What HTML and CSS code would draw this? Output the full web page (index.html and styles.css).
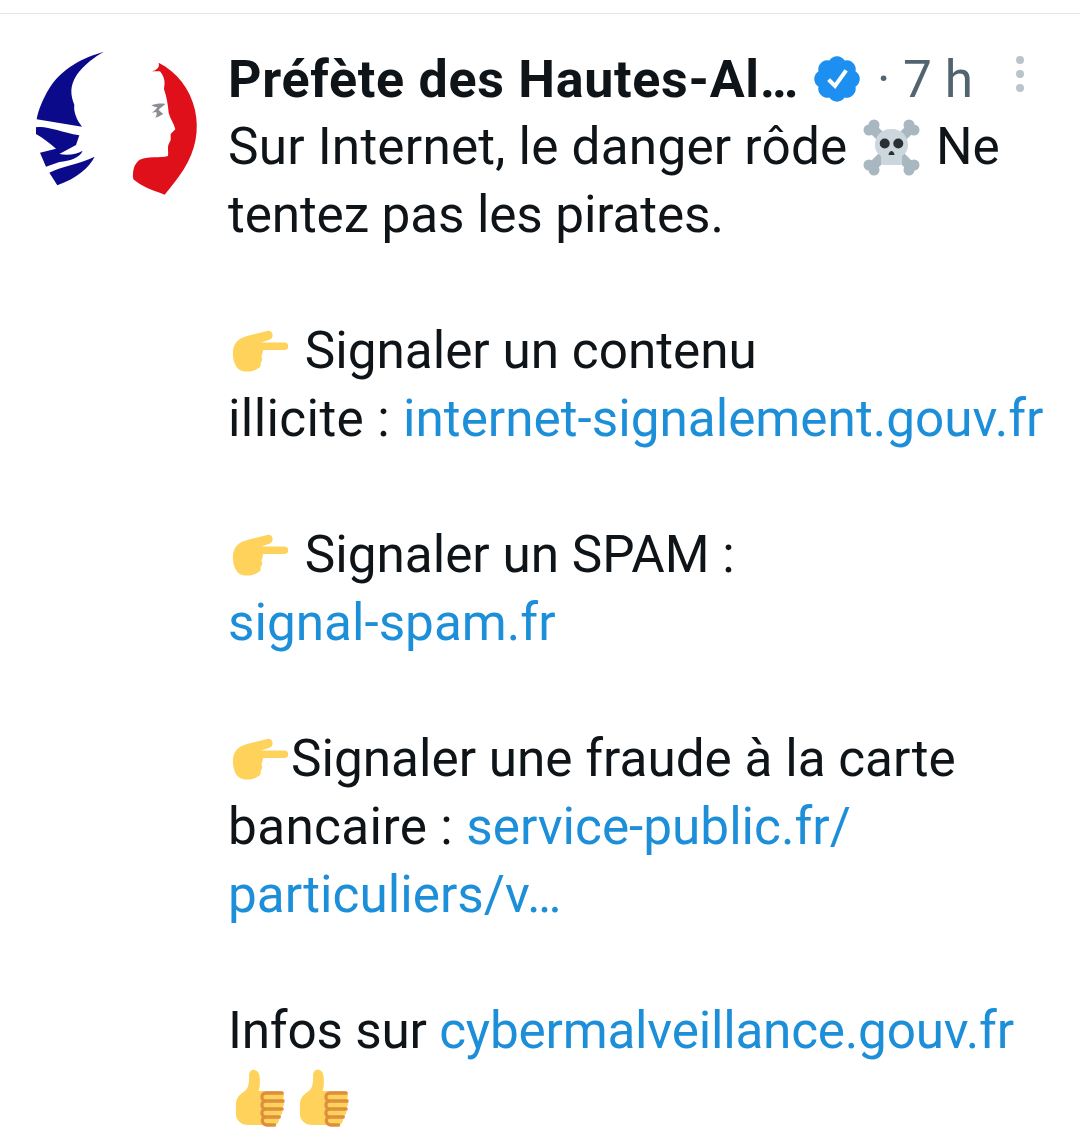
FILE: index.html
```html
<!DOCTYPE html>
<html lang="fr">
<head>
<meta charset="utf-8">
<title>Tweet</title>
<link rel="stylesheet" href="styles.css">
</head>
<body>
<svg class="defs" width="0" height="0" aria-hidden="true">
  <defs>
    <symbol id="point" viewBox="0 0 60 44" preserveAspectRatio="none">
      <path fill="#ffd25c" d="M2 24C2 14 8 8 18 6L38 1C44 0 46 7 41 10L32 13H56C62 13 62 21 56 21H34C33 24 33 26 32 28C34 31 32 33 31 35C32 38 30 40 27 41C22 44 16 44 12 43C5 41 2 33 2 24Z"/>
    </symbol>
    <symbol id="thumb" viewBox="0 0 53 58" preserveAspectRatio="none">
      <path fill="#ffd25c" d="M1 36C1 30 4 26 9 23C14 20 15 16 15 6C15 -1 25 -1 26 7C27 14 26 19 25 22H47C52 22 53 26 51 29C53 33 52 37 50 39C51 43 50 46 47 48C47 53 45 56 41 56H14C6 56 1 51 1 45Z"/>
      <path fill="none" stroke="#dd8f3c" stroke-width="3.4" stroke-linecap="round" d="M50 24H33C27 24 27 32 33 32H51M33 32C27 32 27 40 33 40H50M33 40C27 40 27 48 33 48H47M33 48C27 48 28 56 34 56H42"/>
    </symbol>
    <symbol id="skull" viewBox="0 0 57 57">
      <g fill="#a9b7c1">
        <path d="M13 6L6 13L44 51L51 44Z"/>
        <path d="M44 6L51 13L13 51L6 44Z"/>
        <circle cx="11" cy="6" r="5.5"/><circle cx="6" cy="11" r="5.5"/>
        <circle cx="46" cy="6" r="5.5"/><circle cx="51" cy="11" r="5.5"/>
        <circle cx="11" cy="51" r="5.5"/><circle cx="6" cy="46" r="5.5"/>
        <circle cx="46" cy="51" r="5.5"/><circle cx="51" cy="46" r="5.5"/>
      </g>
      <path fill="#ccd6dd" d="M28.5 10C40 10 45 18 45 26C45 32 42 35 39 37V43C39 46 37 46 35 46H22C20 46 18 46 18 43V37C15 35 12 32 12 26C12 18 17 10 28.5 10Z"/>
      <circle cx="21.7" cy="24.5" r="5" fill="#292f33"/><circle cx="35.3" cy="24.5" r="5" fill="#292f33"/>
      <path fill="#292f33" d="M28.5 32C30.5 32 31.5 35 31.5 36H25.5C25.5 35 26.5 32 28.5 32Z"/>
    </symbol>
  </defs>
</svg>

<main class="page">
  <article class="tweet">
    <div class="avatar-col">
      <svg class="avatar" viewBox="30 54 510 450" role="img" aria-label="Marianne">
        <path fill="#0a0a8a" d="M252 65C190 82 125 115 88 175C68 208 55 240 50 268L186 290C170 270 160 245 163 225C152 195 148 170 170 135C190 105 225 80 252 65Z"/>
        <path fill="#0a0a8a" d="M48 292C80 286 120 306 178 316L168 345L118 372C145 378 170 372 188 362C178 385 150 392 118 396L78 410L60 368L108 356C90 340 70 325 48 312Z"/>
        <path fill="#0a0a8a" d="M88 428C120 410 180 402 224 380C205 414 175 442 112 466Z"/>
        <path fill="#e0101a" d="M416 98C470 125 510 175 525 240C538 300 528 360 490 420C472 448 452 472 434 494C400 482 365 470 340 448C336 425 342 402 358 390C380 378 420 385 444 378C446 365 442 355 445 345L452 330V312L466 298C462 280 450 265 446 248C444 225 440 200 432 178C434 160 438 148 420 124H396C410 120 420 112 416 98Z"/>
        <path fill="#8b8f94" d="M394 226C410 220 425 220 436 222C428 230 420 234 416 240L430 252C420 258 412 262 406 264C410 256 412 250 408 246L396 248C402 244 408 238 412 232C406 232 400 230 394 226Z"/>
      </svg>
    </div>
    <div class="content">
      <header class="head">
        <span class="name">Préfète des Hautes-Al…</span>
        <svg class="badge" viewBox="-1 -1 46 46" aria-label="Compte certifié">
          <path fill="#1d8ff0" d="M29.65 3.52A9 9 0 0 1 40.48 14.35A9 9 0 0 1 40.48 29.65A9 9 0 0 1 29.65 40.48A9 9 0 0 1 14.35 40.48A9 9 0 0 1 3.52 29.65A9 9 0 0 1 3.52 14.35A9 9 0 0 1 14.35 3.52A9 9 0 0 1 29.65 3.52Z"/>
          <path fill="none" stroke="#fff" stroke-width="4" stroke-linecap="square" d="M15 24L20 29L30 15"/>
        </svg>
        <span class="time">· 7 h</span>
        <span class="more" aria-label="Plus"><i></i><i></i><i></i></span>
      </header>
      <div class="body">
        <p class="line"><span class="loose">Sur Internet, le danger rôde</span> <svg class="emoji skull"><use href="#skull"/></svg> Ne</p>
        <p class="line tight-line">tentez pas les pirates.</p>
        <p class="line blank"></p>
        <p class="line"><svg class="emoji point"><use href="#point"/></svg> Signaler un contenu</p>
        <p class="line"><span class="lead-wide">illicite : </span><a>internet-signalement.gouv.fr</a></p>
        <p class="line blank"></p>
        <p class="line"><svg class="emoji point"><use href="#point"/></svg> Signaler un SPAM :</p>
        <p class="line"><a>signal-spam.fr</a></p>
        <p class="line blank"></p>
        <p class="line"><svg class="emoji point tight"><use href="#point"/></svg>Signaler une fraude à la carte</p>
        <p class="line"><span class="lead-wide">bancaire : </span><a>service-public.fr/</a></p>
        <p class="line"><a>particuliers/v…</a></p>
        <p class="line blank"></p>
        <p class="line tight-more">Infos sur <a>cybermalveillance.gouv.fr</a></p>
        <p class="line"><svg class="emoji thumb"><use href="#thumb"/></svg><svg class="emoji thumb"><use href="#thumb"/></svg></p>
      </div>
    </div>
  </article>
</main>
</body>
</html>
```

FILE: styles.css
```css
* { box-sizing: border-box; }
html, body { margin: 0; padding: 0; background: #fff; }
body {
  width: 1080px;
  height: 1144px;
  overflow: hidden;
  font-family: Roboto, "Liberation Sans", sans-serif;
  color: #0f1419;
}
.defs { position: absolute; }
.page {
  margin-top: 13px;
  border-top: 1px solid #e3e6e8;
  height: 1131px;
}
.tweet {
  display: flex;
  padding-top: 31px;
}
.avatar-col {
  width: 228px;
  flex: none;
  padding: 3px 0 0 30px;
}
.avatar {
  display: block;
  width: 170px;
  height: 150px;
}
.content {
  flex: 1;
  min-width: 0;
}
.head {
  display: flex;
  align-items: center;
  height: 68px;
  font-size: 51.3px;
  white-space: nowrap;
}
.name {
  font-size: 52px;
  font-weight: 700;
  letter-spacing: 0.7px;
}
.badge {
  width: 46px;
  height: 46px;
  margin: 0 0 0 15px;
  flex: none;
}
.time {
  margin-left: 17px;
  color: #536471;
}
.more {
  display: flex;
  flex-direction: column;
  gap: 6px;
  margin: -10px 0 0 43px;
}
.more i {
  display: block;
  width: 8px;
  height: 8px;
  border-radius: 50%;
  background: #b9c4cb;
}
.line {
  margin: 0;
  height: 68px;
  line-height: 68px;
  font-size: 51.3px;
  white-space: nowrap;
}
.loose { letter-spacing: 0.21px; }
.lead-wide { letter-spacing: 0.36px; }
.tight-line { letter-spacing: -0.13px; }
.tight-more { letter-spacing: -0.22px; }
a { color: #1d8fd9; }
.emoji { display: inline-block; vertical-align: middle; }
.skull { width: 57px; height: 57px; margin: -6px 3px 0 3px; }
.point { width: 57px; height: 42px; margin: -6px 4px 0 3px; }
.point.tight { margin-right: 3px; }
.thumb { width: 50px; height: 58px; margin: -8px 7px 0 7px; }
```
